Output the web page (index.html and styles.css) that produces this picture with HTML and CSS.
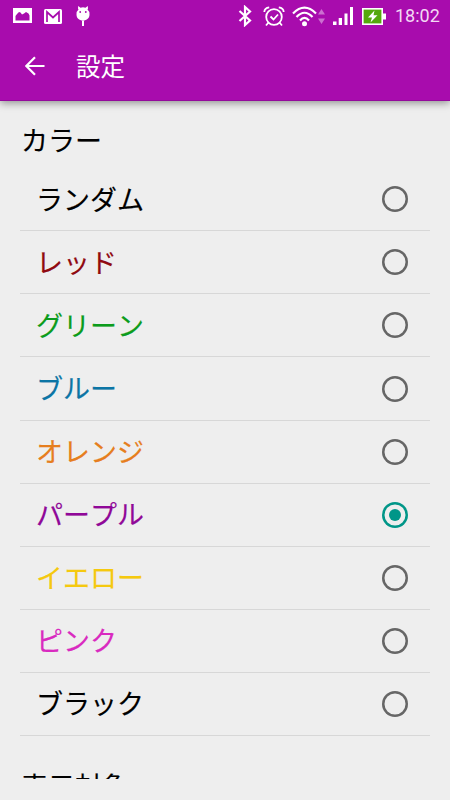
FILE: index.html
```html
<!DOCTYPE html>
<html lang="ja">
<head>
    <meta charset="UTF-8">
    <meta name="viewport" content="width=device-width, initial-scale=1.0">
    <title>設定</title>
    <link rel="stylesheet" href="styles.css">
</head>
<body>
    <header>
        <div class="status-bar">
            <svg class="icon-picture" width="20" height="16" viewBox="0 0 20 16">
                <path fill="#fff" fill-rule="evenodd" d="M0 0h19v15H0zM2.5 12.5h14V7.5L15.500 5.500 13 4 11 5.500 9 6.500 7.500 4.500 6 4 4 6 2.500 8z"/>
            </svg>
            <svg class="icon-mail" width="18" height="15" viewBox="0 0 18 15">
                <rect x="0" y="0" width="18" height="15" rx="1.500" fill="#fff"/>
                <path d="M3 13V3L9 8.500 15 3V13" fill="none" stroke="#a80cad" stroke-width="1.700"/>
            </svg>
            <svg class="icon-bug" width="14" height="21" viewBox="0 0 14 21">
                <path fill="#fff" d="M2.200 0 4.500 1.700Q7 .8 9.500 1.700L11.800 0 12 2.500 11.500 3.500Q13.500 5 13.500 8.500C13.500 12 11 14.500 7 14.500S.5 12 .5 8.500Q.5 5 2.500 3.500L2 2.500z"/>
                <path d="M7 14.500V20" stroke="#fff" stroke-width="2"/>
                <circle cx="4.200" cy="6" r=".9" fill="#a80cad"/>
                <circle cx="9.800" cy="6" r=".9" fill="#a80cad"/>
            </svg>
            <svg class="icon-bluetooth" width="14" height="22" viewBox="0 0 14 22">
                <path d="M1.500 6 12 15.500 7 20V2L12 6.500 1.500 16" fill="none" stroke="#fff" stroke-width="2.200"/>
            </svg>
            <svg class="icon-alarm" width="22" height="21" viewBox="0 0 22 21">
                <g fill="none" stroke="#fff" stroke-width="1.800">
                    <circle cx="11" cy="11" r="7.800"/>
                    <path d="M1.300 6Q1.500 2 6.200 1.400M20.700 6Q20.500 2 15.800 1.400M5.500 16.500 3 19.500M16.500 16.500 19 19.500M7.500 10.500 10.500 13.500 15 8.500"/>
                </g>
            </svg>
            <svg class="icon-wifi" width="25" height="21" viewBox="0 0 25 21">
                <g fill="none" stroke="#fff" stroke-width="2.200">
                    <path d="M1 7.500Q12.500-4 24 7.500M4.500 11Q12.500 2.500 20.500 11M8 14.500Q12.500 9.300 17 14.500"/>
                </g>
                <circle cx="12.500" cy="17.800" r="2.500" fill="#fff"/>
            </svg>
            <svg class="icon-traffic" width="7" height="15" viewBox="0 0 7 15">
                <path fill="#cb70d0" d="M0 5.500 3.500 0 7 5.500zM0 9.500H7L3.500 15z"/>
            </svg>
            <svg class="icon-signal" width="20" height="18" viewBox="0 0 20 18">
                <path fill="#fff" d="M0 14.500h3.500V18H0zM5.700 11H9v7H5.700zM11.500 6.500h3V18h-3zM17 0h3v18h-3z"/>
            </svg>
            <svg class="icon-battery" width="24" height="17" viewBox="0 0 24 17">
                <rect x=".8" y=".8" width="19.400" height="15.400" fill="#55a80c" stroke="#fff" stroke-width="1.600"/>
                <path fill="#fff" d="M21 5.500h3v6h-3zM12.500 2.500 6 9.500h4L8.500 14.500 15.500 7.300h-4z"/>
            </svg>
            <span class="clock">18:02</span>
        </div>
        <div class="app-bar">
            <svg width="20" height="20" viewBox="0 0 20 20">
                <path d="M19.500 10H1.500M10 1.200 1.300 10 10 18.800" fill="none" stroke="#fff" stroke-width="2.200"/>
            </svg>
            <h1>設定</h1>
        </div>
    </header>
    <main>
        <h2>カラー</h2>
        <ul class="color-list">
            <li>ランダム<span class="radio"></span></li>
            <li class="red">レッド<span class="radio"></span></li>
            <li class="green">グリーン<span class="radio"></span></li>
            <li class="blue">ブルー<span class="radio"></span></li>
            <li class="orange">オレンジ<span class="radio"></span></li>
            <li class="purple">パープル<span class="radio checked"></span></li>
            <li class="yellow">イエロー<span class="radio"></span></li>
            <li class="pink">ピンク<span class="radio"></span></li>
            <li>ブラック<span class="radio"></span></li>
        </ul>
        <h2 class="target">表示対象</h2>
    </main>
</body>
</html>
```

FILE: styles.css
```css
* {
    box-sizing: border-box;
}
body {
    margin: 0;
    height: 800px;
    overflow: hidden;
    display: flex;
    flex-direction: column;
    background-color: #eee;
    color: #000;
    font-family: Roboto, "Noto Sans CJK JP", sans-serif;
    font-kerning: none;
}
header {
    flex: none;
    height: 101px;
    background-color: #a80cad;
    border-bottom: 1px solid #940a9c;
    box-shadow: 0 2px 8px rgba(0, 0, 0, 0.4);
    color: #fff;
    z-index: 1;
}
svg {
    display: block;
    flex: none;
}
.status-bar {
    display: flex;
    align-items: center;
    height: 32px;
    padding-left: 13px;
}
.icon-mail {
    margin-left: 11px;
}
.icon-bug {
    margin-left: 14px;
}
.icon-bluetooth {
    margin-left: 148px;
}
.icon-alarm {
    margin-left: 11px;
}
.icon-wifi {
    margin-left: 7px;
}
.icon-traffic {
    margin-left: 1px;
}
.icon-signal {
    margin-left: 8px;
}
.icon-battery {
    margin-left: 9px;
}
.clock {
    margin-left: 9px;
    font-size: 18px;
    line-height: 32px;
    color: #f3d8f4;
}
.app-bar {
    display: flex;
    align-items: center;
    height: 68px;
    padding-left: 25px;
}
h1 {
    margin: 0 0 0 31px;
    padding-top: 4px;
    font-size: 24.5px;
    font-weight: 400;
    line-height: 36px;
}
main {
    flex: none;
    height: 678px;
    padding: 21px 20px 0;
    overflow: hidden;
}
h2 {
    margin: 0 0 0 1px;
    font-size: 27px;
    font-weight: 400;
    line-height: 40px;
    -webkit-text-stroke: 0.15px currentColor;
}
.color-list {
    list-style: none;
    margin: 6.2px 0 0;
    padding: 0;
}
.color-list li {
    display: flex;
    align-items: center;
    justify-content: space-between;
    height: 63.1px;
    padding: 3px 22px 0 16px;
    border-bottom: 1px solid #d7d7d7;
    font-size: 27px;
    line-height: 40px;
    -webkit-text-stroke: 0.15px currentColor;
}
.radio {
    display: flex;
    align-items: center;
    justify-content: center;
    width: 26px;
    height: 26px;
    margin-bottom: 3px;
    border-radius: 50%;
    box-shadow: inset 0 0 0 2.5px #666;
}
.radio.checked {
    box-shadow: inset 0 0 0 2.5px #009688;
}
.radio.checked::after {
    content: "";
    width: 12px;
    height: 12px;
    border-radius: 50%;
    background-color: #009688;
}
.red {
    color: #900a12;
}
.green {
    color: #0c9c1c;
}
.blue {
    color: #0c75a5;
}
.orange {
    color: #e67e1e;
}
.purple {
    color: #900898;
}
.yellow {
    color: #f5c90f;
}
.pink {
    color: #d92ac0;
}
.target {
    margin-top: 32px;
}
```
